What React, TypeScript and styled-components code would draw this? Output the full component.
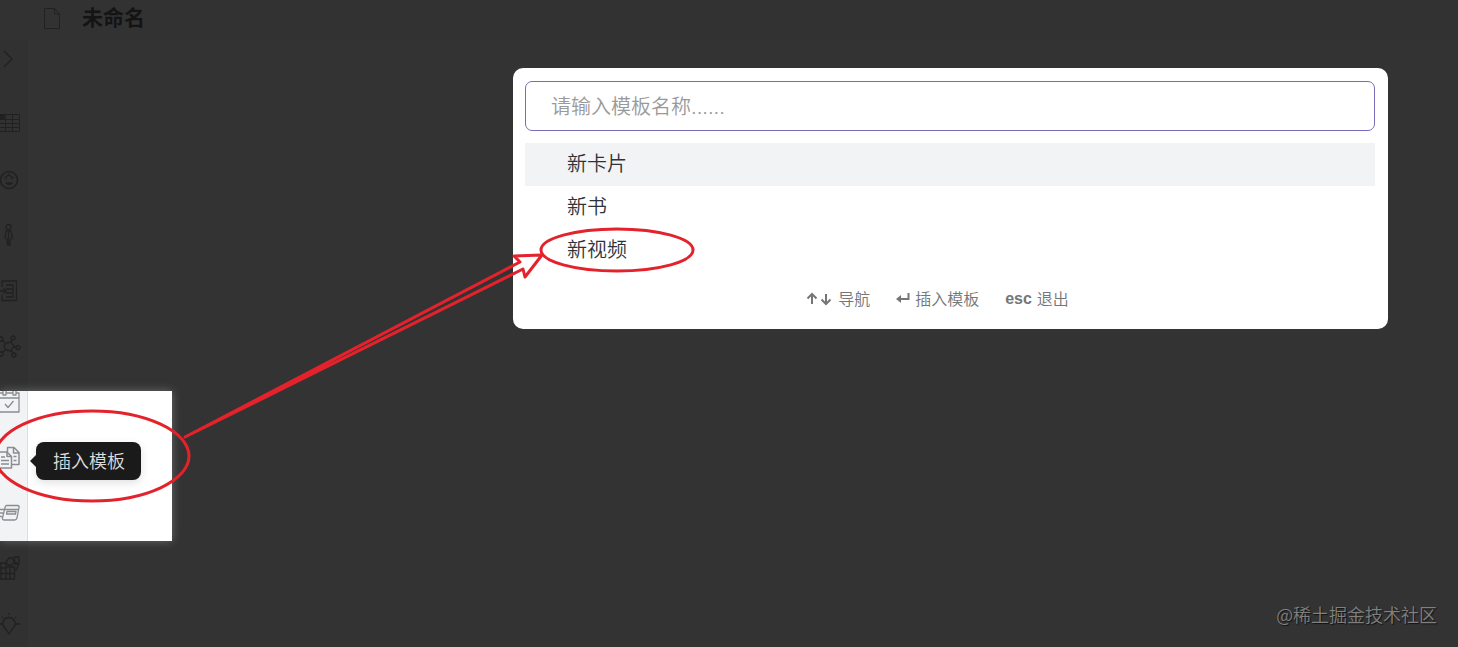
import React from "react";
import styled, { createGlobalStyle } from "styled-components";

const GlobalStyle = createGlobalStyle`
  *, *::before, *::after { box-sizing: border-box; }
  body {
    margin: 0;
    background: #333333;
    font-family: Inter, "Noto Sans CJK SC", sans-serif;
  }
  button, input { font: inherit; }
`;

const Page = styled.div`
  position: relative;
  display: flex;
  flex-direction: column;
  min-height: 100vh;
  overflow: hidden;
  background: #333333;
`;

const Header = styled.header`
  display: flex;
  align-items: center;
  gap: 20px;
  height: 40px;
  padding: 0 0 4px 42px;
  background: #323232;
`;

const Title = styled.h1`
  margin: 0;
  font-size: 21px;
  line-height: 28px;
  font-weight: 700;
  color: #141414;
`;

const Body = styled.div`
  display: flex;
  flex: 1;
`;

const Sidebar = styled.nav`
  display: flex;
  flex-direction: column;
  flex: none;
  width: 28px;
  background: #313131;
`;

const RailGroup = styled.div<{ $top: number }>`
  display: flex;
  flex-direction: column;
  gap: 32px;
  padding-top: ${(p) => p.$top}px;
`;

const RailButton = styled.button<{ $lit?: boolean }>`
  display: flex;
  width: 27px;
  height: 24px;
  padding: 0;
  border: 0;
  background: none;
  color: ${(p) => (p.$lit ? "#8b8d90" : "#212121")};
  cursor: pointer;
`;

const Spotlight = styled.section`
  position: relative;
  z-index: 1;
  display: flex;
  align-items: flex-start;
  flex: none;
  width: 172px;
  height: 150px;
  margin-top: 32px;
  background: #ffffff;
  box-shadow: 0 0 9px rgba(255, 255, 255, 0.28);
`;

const LitRail = styled.div`
  display: flex;
  flex-direction: column;
  gap: 31px;
  flex: none;
  width: 28px;
  height: 100%;
  border-right: 1px solid #dcdfe2;
  background: #f1f3f5;
`;

const Tooltip = styled.div`
  position: relative;
  margin: 51px 0 0 8px;
  padding: 1px 16px 0 17px;
  border-radius: 8px;
  background: #1a1a1a;
  box-shadow: 0 3px 8px rgba(0, 0, 0, 0.12);
  color: #dcdcdc;
  font-size: 18px;
  line-height: 37px;
  font-weight: 350;
  white-space: nowrap;

  &::before {
    content: "";
    position: absolute;
    top: 13px;
    left: -6px;
    border: 6px solid transparent;
    border-right-color: #1a1a1a;
    border-left-width: 0;
  }
`;

const Main = styled.main`
  display: flex;
  flex: 1;
  align-items: flex-start;
  padding: 28px 70px 0 485px;
`;

const Dialog = styled.div`
  display: flex;
  flex-direction: column;
  flex: 1;
  min-width: 0;
  padding: 13px 13px 17px 12px;
  border-radius: 10px;
  background: #ffffff;
`;

const SearchInput = styled.input`
  width: 100%;
  height: 50px;
  padding: 2px 25px 0;
  border: 1px solid #7a6bb8;
  border-radius: 7px;
  outline: 0;
  background: #ffffff;
  color: #2e3338;
  font-size: 20px;
  font-weight: 350;

  &::placeholder {
    color: #999999;
    opacity: 1;
  }
`;

const Options = styled.ul`
  margin: 12px 0 0;
  padding: 0;
  list-style: none;
`;

const Option = styled.button<{ $active?: boolean }>`
  display: block;
  width: 100%;
  height: 43px;
  padding: 0 42px;
  border: 0;
  background: ${(p) => (p.$active ? "#f1f3f5" : "transparent")};
  color: #2e3338;
  font-size: 20px;
  line-height: 43px;
  font-weight: 350;
  text-align: left;
  cursor: pointer;
`;

const Hints = styled.footer`
  display: flex;
  justify-content: center;
  gap: 26px;
  margin-top: 14px;
  padding-right: 25px;
  color: #747678;
  font-size: 16px;
  line-height: 26px;
  font-weight: 350;
`;

const Hint = styled.span`
  display: flex;
  align-items: center;
  gap: 5px;
`;

const Key = styled.kbd`
  font-family: "Liberation Sans", sans-serif;
  font-size: 16px;
  font-weight: 700;
`;

const Annotations = styled.svg`
  position: absolute;
  z-index: 2;
  top: 0;
  left: 0;
  pointer-events: none;
`;

const Watermark = styled.div`
  position: absolute;
  right: 21px;
  bottom: 20px;
  color: #808080;
  font-family: "Noto Sans CJK SC", sans-serif;
  font-size: 18px;
  line-height: 26px;
  font-weight: 350;
  text-shadow: 1px 1px 1px #111111;
`;

const Glyph = ({ children }: { children: React.ReactNode }) => (
  <svg width="21" height="24" viewBox="0 0 21 24" fill="none" stroke="currentColor" strokeWidth="1.3" strokeLinejoin="round" aria-hidden="true">
    {children}
  </svg>
);

const upperTools = [
  { label: "表格", icon: <><path d="M-2 3.500H19.500V20.500H-2M0 8.500H19.500M0 12.500H19.500M0 16.500H19.500M5.500 4V20M12.500 4V20" strokeWidth="1" /><path d="M0 4h4v4H0z" fill="currentColor" /></> },
  { label: "表情", icon: <><circle cx="9" cy="13" r="8.500" strokeWidth="1.600" /><path d="M4 11c3-1 4-2 5-4 0 2 2 3 5 4M6 12h1M11 12h1M6 16c2 2 4 2 6 0z" /></> },
  { label: "人物", icon: <><circle cx="8.500" cy="4" r="2.500" /><path d="M6 8h5l1.500 7-2 1-.5 6H7.500L7 16l-2-1zM8.500 9v12" /></> },
  { label: "导入", icon: <path d="M2 8V2h14.500v19.500H2V16M6 6h7v12H6M6 10h7M6 14h7M-1 12h7M3.500 9.500 6 12l-2.500 2.500" /> },
  { label: "关系图谱", icon: <><path d="m6 8 5-1 3 4-3 5-5-1-2-4zM11 7l1-3M14 12h3M11 15l2 4M5 8 2 5M5 15l-3 3" /><circle cx="13" cy="3" r="2" /><circle cx="18" cy="12.500" r="2" /><circle cx="14" cy="20" r="2" /><circle cx="1" cy="4" r="2" /><circle cx="1" cy="19" r="2" /></> },
];

const litTools = [
  { label: "日历", icon: <path d="M-1 2H3M6 2H13M16 2H19V21H-1M-1 7H19M3 0V4H6V0M13 0V4H16V0M5 13l3 3.500 5.500-6.500" /> },
  { label: "插入模板", icon: <path d="M-1 6H7l4.500 4.500V22H-1M7 6V10.500H11M1 11H5M1 14.500H9M1 18H9M7.500 6V1.500H14l5 5V18.500H12M13.500 2V7H19M13.500 10.500H16.500M13.500 14.500H16.500" strokeWidth="1.500" /> },
  { label: "卡片", icon: <path d="M6.500 4.500H17.500Q19.500 4.500 19 6.500L17 17Q16.500 19 14.500 19H4.500Q2 19 2.500 17L5 6.500Q5.500 4.500 6.500 4.500ZM5 8.500H18M7 10.500H16L15.500 13H6.500ZM0 8.500H4M0 12H3M0 15.500H2" /> },
];

const lowerTools = [
  { label: "组件", icon: <path d="M-1 7H6V23H-1M6 11H14.500V23H6M0 12H6M0 17.500H14.500M10 11V23M1 7V23M6 6l3-4h3l2 3-2 4H8zM14 1h5v6h-4zM14 8h5l-3 6h-2" /> },
  { label: "灵感", icon: <path d="M9 5.500a6 6 0 0 1 5 9.500l-3 4-2 3-2-3-3-4A6 6 0 0 1 9 5.500zM9 1V3M2 5l1 1M16 5l-1 1M0 12H2M16 12H20" /> },
];

const templates = ["新卡片", "新书", "新视频"];

export default function App() {
  return (
    <Page>
      <GlobalStyle />
      <Header>
        <svg width="20" height="24" viewBox="0 0 20 24" fill="none" stroke="#212121" strokeWidth="1" aria-hidden="true">
          <path d="M2.500 2.500H12.500L17.500 8V22.500H2.500ZM12.500 2.500V8H17.500" />
        </svg>
        <Title>未命名</Title>
      </Header>
      <Body>
        <Sidebar aria-label="工具栏">
          <RailGroup $top={7}>
            <RailButton aria-label="展开">
              <Glyph><path d="m4 4 8 8-8 8" /></Glyph>
            </RailButton>
          </RailGroup>
          <RailGroup $top={40}>
            {upperTools.map((t) => (
              <RailButton key={t.label} aria-label={t.label}><Glyph>{t.icon}</Glyph></RailButton>
            ))}
          </RailGroup>
          <Spotlight>
            <LitRail>
              {litTools.map((t) => (
                <RailButton key={t.label} $lit aria-label={t.label}><Glyph>{t.icon}</Glyph></RailButton>
              ))}
            </LitRail>
            <Tooltip role="tooltip">插入模板</Tooltip>
          </Spotlight>
          <RailGroup $top={15}>
            {lowerTools.map((t) => (
              <RailButton key={t.label} aria-label={t.label}><Glyph>{t.icon}</Glyph></RailButton>
            ))}
          </RailGroup>
        </Sidebar>
        <Main>
          <Dialog role="dialog" aria-label="插入模板">
            <SearchInput type="text" aria-label="模板名称" placeholder="请输入模板名称......" />
            <Options>
              {templates.map((name, i) => (
                <li key={name}><Option $active={i === 0}>{name}</Option></li>
              ))}
            </Options>
            <Hints>
              <Hint>
                <svg width="27" height="14" viewBox="0 0 27 14" fill="none" stroke="currentColor" strokeWidth="2" aria-hidden="true">
                  <path d="M6 12V2M1.500 6.500 6 2l4.500 4.500M20 2V12M15.500 7.500 20 12l4.500-4.500" />
                </svg>
                导航
              </Hint>
              <Hint>
                <svg width="14" height="14" viewBox="0 0 14 14" fill="none" stroke="currentColor" strokeWidth="2" aria-hidden="true">
                  <path d="M12.500 1V7H2" />
                  <path d="M5 3 0 7l5 4z" fill="currentColor" stroke="none" />
                </svg>
                插入模板
              </Hint>
              <Hint><Key>esc</Key>退出</Hint>
            </Hints>
          </Dialog>
        </Main>
      </Body>
      <Annotations width="1458" height="647" viewBox="0 0 1458 647" fill="none" stroke="#e3222b" strokeWidth="3" strokeLinejoin="round" aria-hidden="true">
        <ellipse cx="92" cy="456" rx="97" ry="45" />
        <ellipse cx="617" cy="250" rx="76" ry="21" />
        <path d="M185 437 520 262 514 256 542 255 525 277 523 269Z" />
      </Annotations>
      <Watermark>@稀土掘金技术社区</Watermark>
    </Page>
  );
}
